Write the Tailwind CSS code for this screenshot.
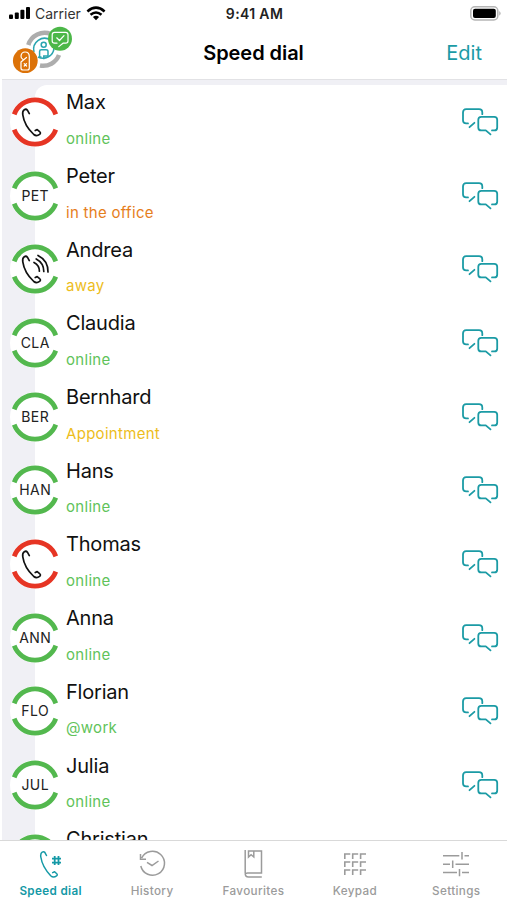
<!DOCTYPE html>
<html lang="en">
<head>
<meta charset="utf-8">
<title>Speed dial</title>
<script src="https://cdn.jsdelivr.net/npm/@tailwindcss/browser@4"></script>
</head>
<body class="bg-white">
<svg class="hidden">
  <symbol id="ring" viewBox="0 0 50 50"><circle cx="25" cy="25" r="25" fill="#fff"/><path d="M4.2 17.3A22.2 22.2 0 0 1 45.8 17.3M4.2 32.7A22.2 22.2 0 0 0 45.8 32.7" fill="none" stroke="currentColor" stroke-width="4.8"/></symbol>
  <symbol id="handset" viewBox="0 0 50 50"><path d="M19.3 16.6L17.4 13.2Q16.2 11.6 14.3 12.7Q12.2 14 12.8 17.8C13.8 24.8 18.3 32.3 23.8 37.5Q26.5 39.6 29.6 37.4Q31.2 35.8 29.6 34.6L27.2 32.6L25.2 33.5" fill="none" stroke="#111" stroke-width="1.7" stroke-linejoin="round" stroke-linecap="round"/></symbol>
  <symbol id="waves" viewBox="0 0 50 50"><path d="M24 18.5Q29.5 21.5 29.4 27.2M26.2 15Q33.8 19 33.8 27.5M28 11.4Q38.2 16.5 38 28" fill="none" stroke="#111" stroke-width="1.7" stroke-linecap="round"/></symbol>
  <symbol id="chat" viewBox="0 0 38 30"><path d="M21.3 7.2V5.5Q21.3 2.2 18 2.2H5.2Q2 2.2 2 5.5V13.2Q2 16.4 5.2 16.4H7M8.5 20.2L13.4 15.8M31 23.4H33.4Q36.2 23.4 36.2 20.4V12.8Q36.2 9.8 33.2 9.8H20.3Q17.3 9.8 17.3 12.8V20.4Q17.3 23.4 20.3 23.4H24.8L29.5 27.4" fill="none" stroke="#1b9ba5" stroke-width="1.8" stroke-linecap="round" stroke-linejoin="round"/></symbol>
</svg>
<div class="w-[507px] h-[900px] flex flex-col overflow-hidden bg-white font-['Inter',sans-serif] text-[#111]">
  <header class="h-[79px] shrink-0 flex flex-col">
    <div class="h-[26px] grid grid-cols-3 items-center pl-2 pr-[5px]">
      <div class="flex items-center">
        <svg class="w-[23px] h-[14px]" viewBox="0 0 23 14"><g fill="#000"><rect x="1" y="8.5" width="4" height="4.5" rx="1"/><rect x="6.8" y="6.5" width="4" height="6.5" rx="1"/><rect x="12.4" y="3.7" width="4" height="9.3" rx="1"/><rect x="18" y="1" width="4" height="12" rx="1"/></g></svg>
        <span class="ml-[4px] text-[14px] leading-none tracking-[0px] mt-[2px] text-[#333]">Carrier</span>
        <svg class="ml-[5px] w-[20px] h-[15px]" viewBox="0 0 20 15"><g fill="none" stroke="#000" stroke-width="2.6"><path d="M1.4 5.4Q10-2 18.6 5.4M4.5 8.8Q10 4.2 15.5 8.8"/></g><path d="M6.9 11.1Q10 8.6 13.1 11.1L10 14.3Z"/></svg>
      </div>
      <div class="text-center text-[14px] font-semibold leading-none mt-px tracking-[0.35px] text-[#222] pr-px">9:41 AM</div>
      <svg class="justify-self-end w-[32px] h-[15px]" viewBox="0 0 32 15"><rect x=".8" y=".8" width="27" height="13.2" rx="4" fill="#fff" stroke="#b5b5b5" stroke-width="1.5"/><rect x="3" y="2.8" width="22.8" height="9.3" rx="2" fill="#000"/><path d="M29.3 5Q32 7.4 29.3 9.8Z" fill="#aaa"/></svg>
    </div>
    <div class="h-[52px] grid grid-cols-3 items-center">
      <svg class="ml-[11px] w-[64px] h-[53px]" viewBox="11 26 64 53"><g fill="none"><path d="M28.3 45A17 17 0 0 1 51 34M59 55A17 17 0 0 1 40 65.5" stroke="#adadad" stroke-width="4.5"/><path d="M50.5 40A11 11 0 0 0 34 52M38 57A11 11 0 0 0 54 48" stroke="#2aa5b0" stroke-width="1.6"/><circle cx="43.7" cy="44.8" r="2.5" stroke="#2aa5b0" stroke-width="1.5"/><path d="M41.5 57H39.6V51.5Q39.6 49.8 41.3 49.8H46Q48 49.8 48 51.5V56H43.8V59.3" stroke="#2aa5b0" stroke-width="1.5"/></g><circle cx="60" cy="38.7" r="12" fill="#4cb748"/><circle cx="25.3" cy="60.7" r="12.4" fill="#dc7208"/><g fill="none" stroke="#fff" stroke-width="1.2" stroke-linecap="round" stroke-linejoin="round"><path d="M57 43.2H54.6Q52.2 43.2 52.2 41V34.8Q52.2 32.4 54.6 32.4H65.6Q68 32.4 68 34.8V41Q68 43.2 65.6 43.2H63L58.8 46.6M56.7 37.8L59.5 40.5L64 35.7"/><path d="M23 59.5Q20.8 58.5 21 56Q21.5 52 25 52Q29.3 52 29.3 56.5V68Q29.3 70 27.3 70H23Q21 70 21 68V62L26.5 57.5M24.2 63.7L26.5 66M26.5 63.7L24.2 66"/></g></svg>
      <h1 class="text-center text-[20px] font-semibold tracking-[-0.05px] text-black">Speed dial</h1>
      <div class="justify-self-end pr-[25px] text-[20px] tracking-[0px] text-[#1b9ba5]">Edit</div>
    </div>
  </header>
  <main class="flex-1 min-h-0 ml-[2px] overflow-hidden bg-[#f0f0f5] border-t border-[#e2e2e5] pt-[5px]">
    <div class="relative">
      <div class="absolute left-[33px] right-0 top-0 h-[800px] bg-white rounded-tl-[12px]"></div>
      <ul id="contacts" class="relative"></ul>
    </div>
  </main>
  <nav class="h-[60px] shrink-0 border-t border-[#d9d9d9] bg-white grid grid-cols-5 text-[11.7px] tracking-[0.35px] font-medium text-[#9b9b9b] text-center">
    <div class="flex flex-col items-center text-[#1499a6] font-semibold"><svg class="w-[32px] h-[32px] mt-[6px]" viewBox="35 846 32 32"><g fill="none" stroke="currentColor" stroke-width="1.5" stroke-linecap="round" stroke-linejoin="round"><path d="M46.5 854.5L44.8 851.4Q43.7 850.3 42.2 851.2Q40.3 852.3 40.8 856C41.8 862.5 45.7 869.5 50.7 874.7Q53.4 877.2 56.5 874.9Q58 873.7 56.5 872.5L54.6 870.8L52.7 871.6"/></g><path d="M54.7 855V864M58.5 855V864M52 857.7H61M52 861.6H61" stroke="currentColor" stroke-width="1.8"/></svg><span class="leading-[14px] mt-[5px]">Speed dial</span></div>
    <div class="flex flex-col items-center"><svg class="w-[32px] h-[32px] mt-[6px]" viewBox="136 846 32 32"><path d="M141.7 857A12 12 0 1 1 140.8 865M140.5 853V858.2H146M147 861.3L152 864.5L158.5 860" fill="none" stroke="currentColor" stroke-width="1.5"/></svg><span class="leading-[14px] mt-[5px]">History</span></div>
    <div class="flex flex-col items-center"><svg class="w-[32px] h-[32px] mt-[6px]" viewBox="237.5 846 32 32"><path d="M245.7 849V872.5Q245.7 876 249 876H262.3M245.7 873Q246 872 248 872H262V850H249V856L251.6 853.7L254.3 856V850" fill="none" stroke="currentColor" stroke-width="1.5"/></svg><span class="leading-[14px] mt-[5px]">Favourites</span></div>
    <div class="flex flex-col items-center"><svg class="w-[32px] h-[32px] mt-[6px]" viewBox="338 846 32 32"><path d="M343.8 858V853H349.3M351.7 858V853H357.2M359.6 858V853H365M343.8 866V861H349.3M351.7 866V861H357.2M359.6 866V861H365M343.8 874V869H349.3M351.7 874V869H357.2M359.6 874V869H365" fill="none" stroke="currentColor" stroke-width="1.6"/></svg><span class="leading-[14px] mt-[5px]">Keypad</span></div>
    <div class="flex flex-col items-center"><svg class="w-[32px] h-[32px] mt-[6px]" viewBox="440 846 32 32"><path d="M443 854.7H459.3M464.5 854.7H469M462 851V858.5M443 863.2H450M455.5 863.2H469M452.7 859.5V867M443 871.6H457M462 871.6H469M459.5 868V875.3" fill="none" stroke="currentColor" stroke-width="1.5"/></svg><span class="leading-[14px] mt-[5px]">Settings</span></div>
  </nav>
</div>
<script>
const green = 'text-[#53b84e]', red = 'text-[#e63524]', orange = 'text-[#e67e1c]', yellow = 'text-[#edbd1c]', online = 'text-[#5fc35a]';
const contacts = [
  ['Max', 'online', online, red, 'phone'],
  ['Peter', 'in the office', orange, green, 'PET'],
  ['Andrea', 'away', yellow, green, 'ringing'],
  ['Claudia', 'online', online, green, 'CLA'],
  ['Bernhard', 'Appointment', yellow, green, 'BER'],
  ['Hans', 'online', online, green, 'HAN'],
  ['Thomas', 'online', online, red, 'phone'],
  ['Anna', 'online', online, green, 'ANN'],
  ['Florian', '@work', online, green, 'FLO'],
  ['Julia', 'online', online, green, 'JUL'],
  ['Christian', 'online', online, green, 'CHR'],
];
const inner = k => k === 'phone' ? '<use href="#handset"/>' : k === 'ringing' ? '<use href="#handset"/><use href="#waves"/>' : `<text x="25.2" y="30" text-anchor="middle" font-size="14" letter-spacing="0.4" fill="#222">${k}</text>`;
document.getElementById('contacts').innerHTML = contacts.map(([n, s, sc, rc, k]) => `
<li class="h-[73.7px] flex items-center pl-[8px] pr-[8px]">
  <svg class="w-[50px] h-[50px] shrink-0 ${rc}" viewBox="0 0 50 50"><use href="#ring"/>${inner(k)}</svg>
  <div class="ml-[6px] flex-1 flex flex-col gap-[15.5px] pb-[5.5px]">
    <span class="text-[20px] leading-[24px] tracking-[-0.2px]">${n}</span>
    <span class="text-[15px] leading-[18px] tracking-[0.3px] ${sc}">${s}</span>
  </div>
  <svg class="w-[38px] h-[30px] shrink-0"><use href="#chat"/></svg>
</li>`).join('');
</script>
</body>
</html>
